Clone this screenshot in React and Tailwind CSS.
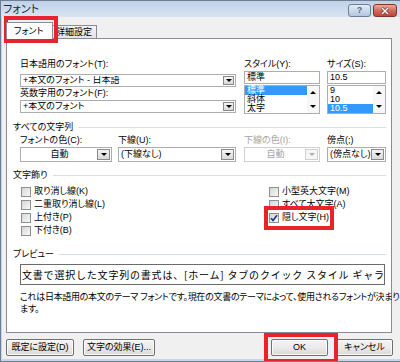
import React from "react";

function Arrow({ up, disabled }) {
  const color = disabled ? "border-t-[#b0b0b0]" : "border-t-black";
  return (
    <span
      className={`h-0 w-0 border-x-[3px] border-t-[3px] border-x-transparent ${color} ${up ? "rotate-180" : ""}`}
    />
  );
}

function DropBtn({ disabled, w = "w-[11px]" }) {
  return (
    <span
      className={`flex ${w} shrink-0 items-center justify-center border ${
        disabled
          ? "border-[#d0d0d0] bg-[#f6f6f6]"
          : "border-[#8a8a8a] bg-gradient-to-b from-[#f4f4f4] to-[#d9d9d9]"
      }`}
    >
      <Arrow disabled={disabled} />
    </span>
  );
}

function Combo({ value, h = "h-[13px]", bw, center, disabled }) {
  return (
    <div
      className={`flex ${h} border bg-white p-px ${
        disabled ? "border-[#d0d0d0] text-[#a3a3a3]" : "border-[#abadb3]"
      }`}
    >
      <span
        className={`flex flex-1 items-center overflow-hidden whitespace-nowrap leading-none ${
          center ? "justify-center" : "pl-[1px]"
        }`}
      >
        {value}
      </span>
      <DropBtn disabled={disabled} w={bw} />
    </div>
  );
}

function ListBox({ items, sel }) {
  return (
    <div className="mt-[1px] flex h-[29px] border border-[#abadb3] bg-white">
      <div className="flex flex-1 flex-col">
        {items.map((t, i) => (
          <div
            key={t}
            className={`h-[9px] pl-[2px] leading-[9px] ${i === sel ? "bg-[#3399ff] text-white" : ""}`}
          >
            {t}
          </div>
        ))}
      </div>
      <div className="flex w-[12px] flex-col items-center justify-between bg-[#f7f7f7] py-[5px]">
        <Arrow up />
        <Arrow />
      </div>
    </div>
  );
}

function Group({ title }) {
  return (
    <div className="flex h-[12px] items-center">
      <span className="leading-none">{title}</span>
      <span className="ml-[5px] h-px flex-1 bg-[#d5dfe5]" />
    </div>
  );
}

function Check({ label, checked }) {
  return (
    <div className="flex h-[13px] items-center">
      <span className="flex h-[10px] w-[10px] items-center justify-center border border-[#8e8f8f] bg-gradient-to-br from-[#d4d6d9] to-[#f8f8f8]">
        {checked && (
          <svg width="8" height="8" viewBox="0 0 8 8">
            <path d="M1 4.2 L3 6.4 L7 1.2" fill="none" stroke="#21398a" strokeWidth="1.7" />
          </svg>
        )}
      </span>
      <span className="ml-[3px] leading-none">{label}</span>
    </div>
  );
}

function Btn({ children, w, def }) {
  return (
    <div
      className={`${w} flex h-[17px] items-center justify-center rounded-[2px] border ${
        def ? "border-[#3c7fb1]" : "border-[#707070]"
      } bg-gradient-to-b from-[#f3f3f3] via-[#ebebeb] to-[#d8d8d8] leading-none shadow-[inset_0_0_0_1px_#fbfbfb]`}
    >
      {children}
    </div>
  );
}

export default function App() {
  return (
    <div className="relative flex h-[362px] w-[400px] flex-col overflow-hidden border-b border-l border-t border-[#6e7f93] bg-[#c4d5ea] font-['Liberation_Sans','Noto_Sans_CJK_JP',sans-serif] text-[9px] text-black [font-feature-settings:'palt']">
      {/* title bar */}
      <div className="flex h-[16px] items-start bg-gradient-to-b from-[#c0d1e7] to-[#d8e4f2] pr-[3px] pt-[3px]">
        <span className="pl-[2px] text-[11px] leading-[11px] text-[#1b2a3c]">フォント</span>
        <div className="ml-auto flex h-[13px] w-[23px] items-center justify-center rounded-[3px] border border-[#6d7f96] bg-gradient-to-b from-[#e4ecf6] to-[#b3c6de] text-[9px] font-bold leading-none text-[#5a6678]">
          ?
        </div>
        <div className="ml-[2px] flex h-[13px] w-[24px] items-center justify-center rounded-[3px] border border-[#83352c] bg-gradient-to-b from-[#e8aa9f] via-[#d46a5c] to-[#c2453a]">
          <svg width="10" height="8" viewBox="0 0 10 8">
            <path d="M2 1 L8 7 M8 1 L2 7" stroke="#5a2a24" strokeWidth="2.6" />
            <path d="M2 1 L8 7 M8 1 L2 7" stroke="#ffffff" strokeWidth="1.5" />
          </svg>
        </div>
      </div>

      {/* client area */}
      <div className="mb-[2px] ml-[1px] flex flex-1 flex-col bg-[#f0f0f0] pl-[4px]">
        {/* tabs */}
        <div className="flex h-[21px] items-end">
          <div className="relative z-10 -mb-px flex h-[17px] w-[47px] items-end border-x border-t border-[#898c95] bg-white pb-[2px] pl-[7px] leading-[12px]">
            フォント
          </div>
          <div className="flex h-[13px] w-[44px] items-center border-r border-t border-[#898c95] bg-gradient-to-b from-[#f3f3f3] to-[#e3e3e3] pl-[3px] leading-[11px]">
            詳細設定
          </div>
        </div>

        {/* panel */}
        <div className="mr-[8px] flex h-[295px] flex-col border border-[#898c95] bg-white pl-[6px] pr-[5px] pt-[19px]">
          <div className="flex pl-[7px]">
            <div className="flex w-[216px] flex-col">
              <div className="h-[12px] leading-[12px]">日本語用のフォント(T):</div>
              <div className="mt-[4px]">
                <Combo value="+本文のフォント - 日本語" />
              </div>
              <div className="h-[12px] leading-[12px]">英数字用のフォント(F):</div>
              <div className="mt-[1px]">
                <Combo value="+本文のフォント" />
              </div>
            </div>
            <div className="ml-[8px] flex w-[76px] flex-col">
              <div className="h-[12px] leading-[12px]">スタイル(Y):</div>
              <div className="mt-[1px] flex h-[13px] items-center border border-[#abadb3] bg-white pl-[2px] leading-none">
                標準
              </div>
              <ListBox items={["標準", "斜体", "太字"]} sel={0} />
            </div>
            <div className="ml-[7px] flex flex-1 flex-col">
              <div className="h-[12px] leading-[12px]">サイズ(S):</div>
              <div className="mt-[1px] flex h-[13px] items-center border border-[#abadb3] bg-white pl-[2px] leading-none">
                10.5
              </div>
              <ListBox items={["9", "10", "10.5"]} sel={2} />
            </div>
          </div>

          <div className="mt-[7px]">
            <Group title="すべての文字列" />
          </div>
          <div className="mt-[1px] flex pl-[7px]">
            <div className="flex w-[92px] flex-col">
              <div className="h-[12px] leading-[12px]">フォントの色(C):</div>
              <div className="mt-[1px]">
                <Combo value="自動" h="h-[15px]" bw="w-[13px]" center />
              </div>
            </div>
            <div className="ml-[6px] flex w-[118px] flex-col">
              <div className="h-[12px] leading-[12px]">下線(U):</div>
              <div className="mt-[1px]">
                <Combo value="(下線なし)" h="h-[15px]" bw="w-[13px]" />
              </div>
            </div>
            <div className="ml-[8px] flex w-[76px] flex-col">
              <div className="h-[12px] leading-[12px] text-[#a3a3a3]">下線の色(I):</div>
              <div className="mt-[1px]">
                <Combo value="自動" h="h-[15px]" bw="w-[13px]" center disabled />
              </div>
            </div>
            <div className="ml-[7px] flex flex-1 flex-col">
              <div className="h-[12px] leading-[12px]">傍点(;)</div>
              <div className="mt-[1px]">
                <Combo value="(傍点なし)" h="h-[15px]" bw="w-[13px]" />
              </div>
            </div>
          </div>

          <div className="mt-[7px]">
            <Group title="文字飾り" />
          </div>
          <div className="mt-[4px] flex pl-[8px]">
            <div className="flex w-[248px] flex-col">
              <Check label="取り消し線(K)" />
              <Check label="二重取り消し線(L)" />
              <Check label="上付き(P)" />
              <Check label="下付き(B)" />
            </div>
            <div className="flex flex-col">
              <Check label="小型英大文字(M)" />
              <Check label="すべて大文字(A)" />
              <Check label="隠し文字(H)" checked />
            </div>
          </div>

          <div className="mt-[11px]">
            <Group title="プレビュー" />
          </div>
          <div className="ml-[7px] mr-[1px] mt-[4px] flex h-[21px] items-center overflow-hidden whitespace-nowrap border border-[#6b6b6b] pl-[1px] font-['Noto_Sans_CJK_JP',sans-serif] text-[10px] leading-none tracking-[0.8px] [font-feature-settings:normal]">
            文書で選択した文字列の書式は、[ホーム] タブのクイック スタイル ギャラリーで選択します。
          </div>
          <div className="mt-[6px] whitespace-nowrap pl-[7px] leading-[12px] tracking-[-0.3px]">
            <div>これは日本語用の本文のテーマ フォントです。現在の文書のテーマによって、使用されるフォントが決まり</div>
            <div>ます。</div>
          </div>
        </div>

        {/* buttons */}
        <div className="mr-[7px] flex pt-[6px]">
          <Btn w="w-[68px]">既定に設定(D)</Btn>
          <Btn w="ml-[9px] w-[72px]">文字の効果(E)...</Btn>
          <Btn w="ml-auto w-[57px]" def>
            OK
          </Btn>
          <Btn w="ml-[8px] w-[57px]">キャンセル</Btn>
        </div>
      </div>

      {/* red annotation frames */}
      <div className="absolute left-[3px] top-[15px] h-[27px] w-[54px] border-[4px] border-[#e8232b]" />
      <div className="absolute left-[263px] top-[205px] h-[24px] w-[70px] border-[4px] border-[#e8232b]" />
      <div className="absolute left-[263px] top-[332px] h-[30px] w-[74px] border-[4px] border-[#e8232b]" />
    </div>
  );
}
